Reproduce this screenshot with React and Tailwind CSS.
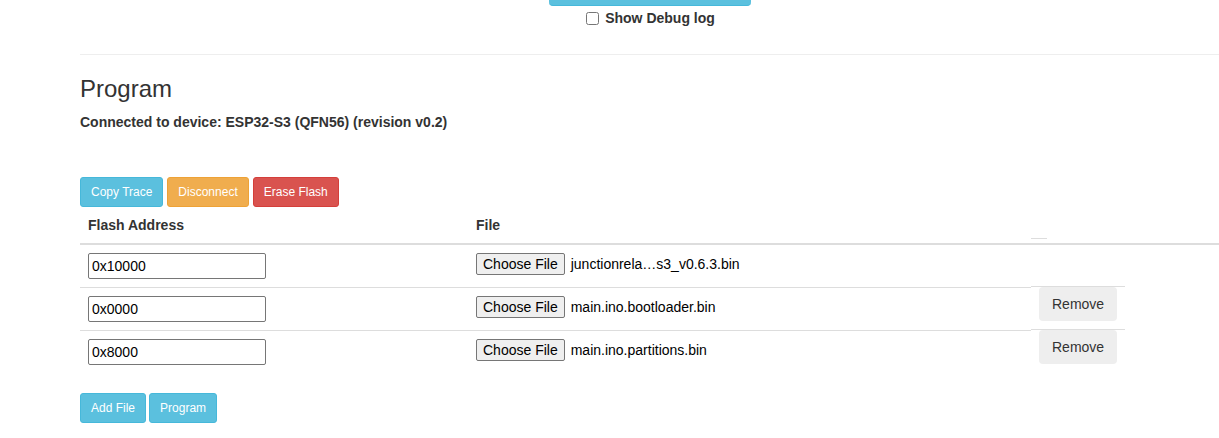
import React from "react";

const rows = [
  { address: "0x10000", file: "junctionrela…s3_v0.6.3.bin", removable: false },
  { address: "0x0000", file: "main.ino.bootloader.bin", removable: true },
  { address: "0x8000", file: "main.ino.partitions.bin", removable: true },
];

const btnSm = "h-[30px] px-[10px] rounded-[3px] border text-[12px] leading-[18px] text-white";

export default function App() {
  return (
    <div className="min-h-[438px] overflow-hidden bg-white pl-[80px] font-['Liberation_Sans',Arial,sans-serif] text-[14px] leading-[20px] text-[#333]">
      {/* Connect area tail */}
      <div className="flex flex-col items-center">
        <div className="h-[6px] w-[202px] rounded-b-[4px] border-b border-[#46b8da] bg-[#5bc0de]" />
        <label className="mt-[2px] flex items-center font-bold">
          <input type="checkbox" className="m-0 mr-[6px] ml-[2px] h-[13px] w-[13px]" />
          Show Debug log
        </label>
      </div>

      <hr className="mt-[26px] border-t border-[#eeeeee]" />

      <h3 className="mt-[21px] text-[24px] leading-[26.4px] font-normal">Program</h3>
      <p className="mt-[10px] font-bold">Connected to device: ESP32-S3 (QFN56) (revision v0.2)</p>

      <div className="mt-[45px] flex gap-[4px]">
        <button className={`${btnSm} border-[#46b8da] bg-[#5bc0de]`}>Copy Trace</button>
        <button className={`${btnSm} border-[#eea236] bg-[#f0ad4e]`}>Disconnect</button>
        <button className={`${btnSm} border-[#d43f3a] bg-[#d9534f]`}>Erase Flash</button>
      </div>

      {/* Flash table */}
      <div>
        <div className="grid grid-cols-[388px_563px_1fr] border-b-2 border-[#dddddd] font-bold">
          <div className="p-2">Flash Address</div>
          <div className="p-2">File</div>
          <div className="flex items-end pb-[4px]">
            <div className="h-px w-4 bg-[#dddddd]" />
          </div>
        </div>
        {rows.map((row, i) => (
          <div key={row.address} className="grid grid-cols-[388px_563px_1fr]">
            <div className={`p-2 ${i > 0 ? "border-t border-[#dddddd]" : ""}`}>
              <input
                type="text"
                defaultValue={row.address}
                className="h-[26px] w-[178px] rounded-[2px] border border-[#767676] pl-[3px] text-[14px] text-black outline-none"
              />
            </div>
            <div className={`p-2 ${i > 0 ? "border-t border-[#dddddd]" : ""}`}>
              <div className="flex items-center gap-[6px]">
                <button className="h-[22px] rounded-[2px] border border-[#767676] bg-[#efefef] px-[6px] text-[14px] leading-[18px] text-black">
                  Choose File
                </button>
                <span className="text-black">{row.file}</span>
              </div>
            </div>
            <div>
              {row.removable && (
                <div className="-mt-px w-[94px] border-t border-[#dddddd]">
                  <button className="ml-2 h-[34px] rounded-[4px] bg-[#eeeeee] px-[13px] text-[14px] text-[#333]">
                    Remove
                  </button>
                </div>
              )}
            </div>
          </div>
        ))}
      </div>

      <div className="mt-[20px] flex gap-[3px]">
        <button className={`${btnSm} border-[#46b8da] bg-[#5bc0de]`}>Add File</button>
        <button className={`${btnSm} border-[#46b8da] bg-[#5bc0de]`}>Program</button>
      </div>
    </div>
  );
}
